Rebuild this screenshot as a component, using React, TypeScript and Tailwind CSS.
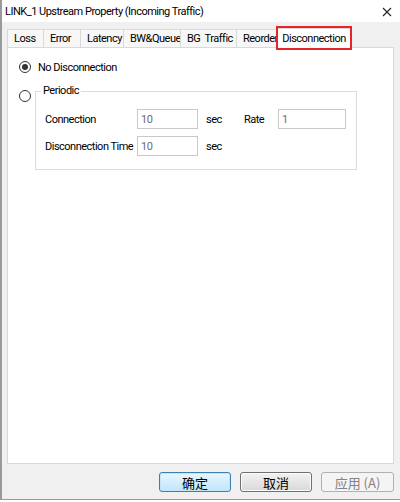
import type { ReactNode } from "react";

// Diálogo estilo Windows: propriedades do link, aba "Disconnection" ativa.

const tabs = [
  { label: "Loss", w: "w-[36px]" },
  { label: "Error", w: "w-[37px]" },
  { label: "Latency", w: "w-[43px]" },
  { label: "BW&Queue", w: "w-[57px]" },
  { label: "BG\u00a0 Traffic", w: "w-[56px]" },
  { label: "Reorder", w: "w-[42px]" },
];

function Radio({ checked }: { checked?: boolean }) {
  return (
    <span className="flex h-[12px] w-[12px] shrink-0 items-center justify-center rounded-full border border-[#333] bg-white">
      {checked && <span className="h-[6px] w-[6px] rounded-full bg-[#333]" />}
    </span>
  );
}

function Field({ value, w }: { value: string; w: string }) {
  return (
    <div
      className={`flex h-[20px] shrink-0 items-center border border-[#c9c9c9] bg-white pl-[3px] text-[#6d6d6d] ${w}`}
    >
      {value}
    </div>
  );
}

function Button({
  children,
  kind = "normal",
  w,
}: {
  children: ReactNode;
  kind?: "default" | "normal" | "disabled";
  w: string;
}) {
  const styles = {
    default:
      "border-[#3c7fb1] bg-gradient-to-b from-[#eaf6fd] to-[#bee6fd] text-black shadow-[inset_0_0_0_1px_#c4e5f6]",
    normal:
      "border-[#707070] bg-gradient-to-b from-[#f2f2f2] to-[#d9d9d9] text-black shadow-[inset_0_0_0_1px_#fcfcfc]",
    disabled: "border-[#adb2b5] bg-[#f4f4f4] text-[#838383]",
  }[kind];
  return (
    <div
      className={`flex h-[20px] items-center justify-center rounded-[3px] border font-['Noto_Sans_CJK_SC',sans-serif] text-[13px] tracking-normal ${w} ${styles}`}
    >
      {children}
    </div>
  );
}

export default function App() {
  return (
    <div className="flex h-[502px] w-[400px] flex-col overflow-hidden bg-white font-['Roboto','Noto_Sans_CJK_SC',sans-serif] text-[11px] leading-none tracking-[-0.5px] text-black">
      <div className="flex h-[500px] flex-col border-b border-l-2 border-[#9a9a9a]">
        {/* barra de título */}
        <div className="flex h-[22px] shrink-0 items-center justify-between bg-white pl-[3px] pr-[8px]">
          <span className="whitespace-nowrap">LINK_1 Upstream Property (Incoming Traffic)</span>
          <svg width="10" height="10" viewBox="0 0 10 10" className="mt-[1px]">
            <path d="M1 1 L9 9 M9 1 L1 9" stroke="#222" strokeWidth="1.1" />
          </svg>
        </div>

        <div className="flex flex-1 flex-col bg-[#f0f0f0] pl-[5px] pr-[6px]">
          {/* abas */}
          <div className="mt-[6px] flex h-[19px] items-end">
            {tabs.map((t) => (
              <div
                key={t.label}
                className={`flex h-[18px] shrink-0 items-center overflow-hidden whitespace-nowrap border border-b-0 border-r-0 border-[#d9d9d9] bg-[#f7f7f7] pl-[6px] ${t.w}`}
              >
                {t.label}
              </div>
            ))}
            <div className="relative z-10 -mb-px -ml-[2px] flex h-[20px] w-[76px] shrink-0 items-center justify-center whitespace-nowrap border border-b-0 border-[#d9d9d9] bg-white">
              Disconnection
              <span className="pointer-events-none absolute -inset-x-[1px] -bottom-[2px] -top-[3px] border-2 border-[#e8242b]" />
            </div>
          </div>

          {/* painel */}
          <div className="h-[417px] border border-[#d9d9d9] bg-white pl-[11px]">
            <div className="mt-[13px] flex items-center gap-[7px]">
              <Radio checked />
              <span className="whitespace-nowrap">No Disconnection</span>
            </div>

            <div className="mt-[10px] flex items-start gap-[4px]">
              <div className="mt-[7px]">
                <Radio />
              </div>
              <fieldset className="w-[322px] border border-[#dcdcdc] px-[9px] pb-[13px] pt-[10px]">
                <legend className="-ml-[4px] px-[2px] leading-[16px]">Periodic</legend>
                <div className="flex items-center whitespace-nowrap">
                  <span className="w-[92px]">Connection</span>
                  <Field value="10" w="w-[61px]" />
                  <span className="ml-[8px] w-[38px]">sec</span>
                  <span className="w-[34px]">Rate</span>
                  <Field value="1" w="w-[68px]" />
                </div>
                <div className="mt-[7px] flex items-center whitespace-nowrap">
                  <span className="w-[92px]">Disconnection Time</span>
                  <Field value="10" w="w-[61px]" />
                  <span className="ml-[8px]">sec</span>
                </div>
              </fieldset>
            </div>
          </div>

          {/* botões */}
          <div className="mt-[8px] flex justify-end gap-[9px]">
            <Button kind="default" w="w-[72px]">
              确定
            </Button>
            <Button w="w-[72px]">取消</Button>
            <Button kind="disabled" w="w-[73px]">
              应用 (A)
            </Button>
          </div>
        </div>
      </div>
    </div>
  );
}
